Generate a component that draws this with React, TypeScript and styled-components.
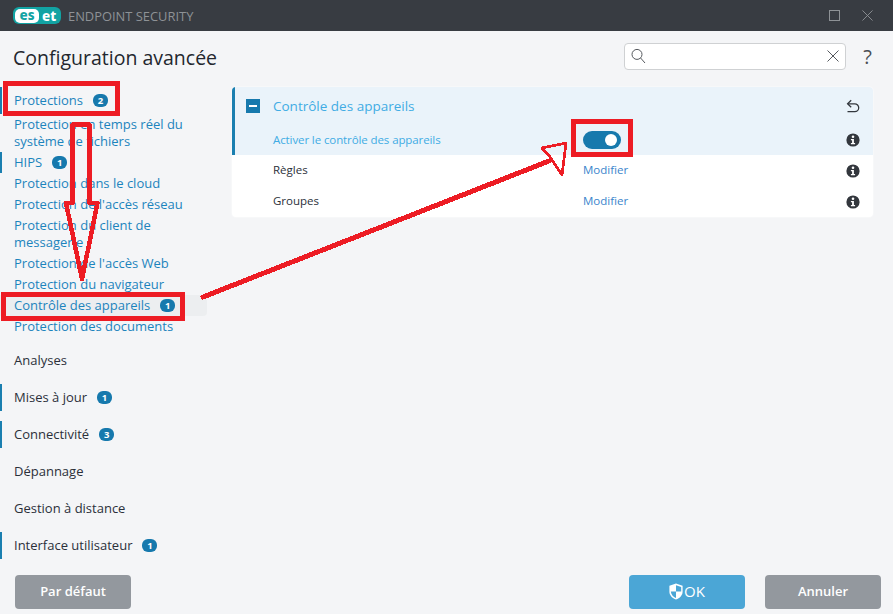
import React from 'react';
import styled, { createGlobalStyle } from 'styled-components';

const GlobalStyle = createGlobalStyle`
  html, body { margin: 0; padding: 0; background: #f4f5f7; }
  body { font-family: "Open Sans", "Noto Sans", sans-serif; }
`;

const Window = styled.div`
  position: relative;
  width: 893px;
  height: 614px;
  overflow: hidden;
  display: flex;
  flex-direction: column;
  background: #f4f5f7;
`;

const TitleBar = styled.header`
  height: 31px;
  flex: none;
  display: flex;
  align-items: center;
  padding: 0 19px 0 13px;
  background: #383c42;
`;

const Logo = styled.div`
  width: 48px;
  height: 17px;
  margin-right: 7px;
  box-sizing: border-box;
  display: flex;
  align-items: center;
  border-radius: 6px;
  background: #12a3a3;
  color: #fff;
  font: 800 13.5px/14px "Noto Sans", sans-serif;
  overflow: hidden;
`;

const LogoChip = styled.span`
  width: 24px;
  height: 14px;
  margin: 0 3px 0 2px;
  border-radius: 5px;
  background: #fff;
  color: #12a3a3;
  text-align: center;
  line-height: 12px;
`;

const Product = styled.span`
  flex: 1;
  color: #8e9296;
  font: 400 12.9px "Open Sans", sans-serif;
`;

const WindowButton = styled.button`
  width: 12px;
  height: 12px;
  margin-left: 21px;
  padding: 0;
  border: 0;
  background: none;
  display: block;
  svg { display: block; }
`;

const PageHeader = styled.div`
  height: 55px;
  flex: none;
  display: flex;
  align-items: center;
  padding: 0 21px 5px 13px;
  box-sizing: border-box;
`;

const Title = styled.h1`
  flex: 1;
  margin: 0;
  padding-top: 2px;
  color: #23272e;
  font: 500 19.5px "Open Sans", sans-serif;
`;

const SearchBox = styled.div`
  width: 222px;
  height: 27px;
  box-sizing: border-box;
  display: flex;
  align-items: center;
  justify-content: space-between;
  padding: 0 6px;
  border: 1px solid #cfd1d3;
  border-radius: 4px;
  background: #fff;
`;

const Help = styled.span`
  margin-left: 17px;
  color: #4a4e54;
  font: 400 20px "Open Sans", sans-serif;
`;

const Body = styled.div`
  flex: 1;
  display: flex;
  align-items: flex-start;
  padding-top: 1px;
`;

const Sidebar = styled.nav`
  width: 207px;
  flex: none;
  margin-right: 25px;
  display: flex;
  flex-direction: column;
`;

const Group = styled.div`
  display: flex;
  flex-direction: column;
  margin-bottom: 10px;
`;

const NavRow = styled.div<{ $marked?: boolean; $top?: boolean; $link?: boolean; $selected?: boolean }>`
  position: relative;
  display: flex;
  align-items: center;
  min-height: ${p => (p.$top ? 27 : 21)}px;
  box-sizing: border-box;
  padding: 2px 20px 2px 14px;
  color: ${p => (p.$link ? '#1c84bd' : '#2b303a')};
  font-size: 13px;
  font-weight: 500;
  line-height: 17px;
  background: ${p => (p.$selected ? '#eceef0' : 'transparent')};
  border-radius: ${p => (p.$selected ? '0 4px 4px 0' : '0')};
  &::before {
    content: '';
    display: ${p => (p.$marked ? 'block' : 'none')};
    position: absolute;
    left: 0;
    top: 0;
    bottom: 0;
    width: 2px;
    background: #1a7fb0;
  }
`;

const Badge = styled.span`
  flex: none;
  width: 15px;
  height: 13px;
  margin-left: 10px;
  border-radius: 6px;
  background: #1679ad;
  color: #fff;
  font: 700 9.5px/13px "Open Sans", sans-serif;
  text-align: center;
`;

const Panel = styled.section`
  width: 641px;
  border-radius: 4px;
  background: #fff;
  overflow: hidden;
  box-shadow: 0 0 0 1px #f7f8f9;
`;

const PanelHead = styled.div`
  border-left: 3px solid #1a7fb0;
  background: #eaf3fa;
`;

const Row = styled.div<{ $height: number }>`
  height: ${p => p.$height}px;
  display: flex;
  align-items: center;
  padding: 0 13px 0 0;
  font-size: 11.5px;
  color: #2b303a;
`;

const HeadRow = styled(Row)`
  color: #41ace4;
  font-size: 13.5px;
  font-weight: 500;
`;

const Expander = styled.span`
  width: 14px;
  height: 14px;
  margin: 0 13px 0 11px;
  display: flex;
  align-items: center;
  justify-content: center;
  background: #1679ad;
  &::after {
    content: '';
    width: 8px;
    height: 2px;
    background: #fff;
  }
`;

const Label = styled.span<{ $accent?: boolean; $indent?: number }>`
  width: 310px;
  margin-left: ${p => p.$indent ?? 38}px;
  padding-bottom: 2px;
  flex: none;
  color: ${p => (p.$accent ? '#41ace4' : '#2b303a')};
  font-weight: 400;
  letter-spacing: ${p => (p.$accent ? '-0.1px' : '0')};
`;

const LinkValue = styled.span`
  flex: 1;
  padding-bottom: 2px;
  color: #3a85cc;
`;

const Toggle = styled.span`
  position: relative;
  flex: none;
  width: 38px;
  height: 18px;
  margin-bottom: 1px;
  border-radius: 9px;
  background: #1679ad;
  &::after {
    content: '';
    position: absolute;
    right: 4px;
    top: 3px;
    width: 12px;
    height: 12px;
    border-radius: 50%;
    background: #fff;
  }
`;

const Spacer = styled.span`
  flex: 1;
`;

const Footer = styled.footer`
  height: 46px;
  flex: none;
  display: flex;
  align-items: flex-start;
  padding: 6px 12px 6px 15px;
  box-sizing: border-box;
  gap: 20px;
`;

const ActionButton = styled.button<{ $primary?: boolean }>`
  width: 116px;
  height: 34px;
  padding: 0 0 2px;
  display: flex;
  align-items: center;
  justify-content: center;
  border: 0;
  border-radius: 4px;
  background: ${p => (p.$primary ? '#4ba6d6' : '#93989e')};
  color: #fff;
  font: ${p => (p.$primary ? '500 15px' : '600 13px')} "Open Sans", sans-serif;
  svg { margin-right: 1px; }
`;

const FooterGap = styled.div`
  flex: 1;
`;

const RedBox = styled.div<{ $x: number; $y: number; $w: number; $h: number }>`
  position: absolute;
  left: ${p => p.$x}px;
  top: ${p => p.$y}px;
  width: ${p => p.$w}px;
  height: ${p => p.$h}px;
  box-sizing: border-box;
  border: 5px solid #ed1c24;
`;

const Annotations = styled.svg`
  position: absolute;
  left: 0;
  top: 0;
  pointer-events: none;
`;

const InfoIcon = () => (
  <svg width="14" height="14" viewBox="0 0 14 14">
    <circle cx="7" cy="7" r="6.6" fill="#33373d" />
    <circle cx="7" cy="3.8" r="1.3" fill="#fff" />
    <path d="M4.9 6h3v4h1.2v1.2H4.9V10h1.2V7.2H4.9z" fill="#fff" />
  </svg>
);

const UndoIcon = () => (
  <svg width="14" height="14" viewBox="0 0 14 14" fill="none" stroke="#33373d" strokeWidth="1.3">
    <path d="M1.5 12.6h7.3a3.9 3.9 0 0 0 0-7.8H1.8" />
    <path d="M5.2 1.2 1.6 4.8l3.6 3.4" />
  </svg>
);

const CrossIcon = ({ size, color }: { size: number; color: string }) => (
  <svg width={size} height={size} viewBox="0 0 12 12" fill="none" stroke={color} strokeWidth="1">
    <path d="M.5.5l11 11M11.5.5l-11 11" />
  </svg>
);

const SearchIcon = () => (
  <svg width="15" height="16" viewBox="0 0 15 16" fill="none" stroke="#55595e" strokeWidth="1">
    <circle cx="6" cy="6.4" r="5" />
    <path d="M9.6 10l4.4 5" />
  </svg>
);

const ShieldIcon = () => (
  <svg width="14" height="17" viewBox="0 0 14 17">
    <path d="M7 .4 13.6 2.8v5.6c0 3.8-2.8 6.6-6.6 8.2C3.2 15 .4 12.2.4 8.4V2.8z" fill="#fff" />
    <path d="M7 2.2 12.2 4v4.4H7zM7 8.4V15c-2.8-1.4-5-3.6-5.2-6.6z" fill="#4ba6d6" />
  </svg>
);

const subItems = [
  { label: 'Protection en temps réel du système de fichiers' },
  { label: 'HIPS', badge: 1, marked: true },
  { label: 'Protection dans le cloud' },
  { label: "Protection de l'accès réseau" },
  { label: 'Protection du client de messagerie' },
  { label: "Protection de l'accès Web" },
  { label: 'Protection du navigateur' },
  { label: 'Contrôle des appareils', badge: 1, selected: true },
  { label: 'Protection des documents' },
];

const topItems = [
  { label: 'Analyses' },
  { label: 'Mises à jour', badge: 1, marked: true },
  { label: 'Connectivité', badge: 3, marked: true },
  { label: 'Dépannage' },
  { label: 'Gestion à distance' },
  { label: 'Interface utilisateur', badge: 1, marked: true },
];

export default function App() {
  return (
    <Window>
      <GlobalStyle />
      <TitleBar>
        <Logo>
          <LogoChip>es</LogoChip>
          et
        </Logo>
        <Product>ENDPOINT SECURITY</Product>
        <WindowButton>
          <svg width="11" height="11" viewBox="0 0 11 11" fill="none" stroke="#8e9296">
            <rect x=".5" y=".5" width="10" height="10" />
          </svg>
        </WindowButton>
        <WindowButton>
          <CrossIcon size={11} color="#8e9296" />
        </WindowButton>
      </TitleBar>

      <PageHeader>
        <Title>Configuration avancée</Title>
        <SearchBox>
          <SearchIcon />
          <CrossIcon size={12} color="#55595e" />
        </SearchBox>
        <Help>?</Help>
      </PageHeader>

      <Body>
        <Sidebar>
          <Group>
            <NavRow $top $link $marked>
              Protections
              <Badge>2</Badge>
            </NavRow>
            {subItems.map(item => (
              <NavRow key={item.label} $link $marked={item.marked} $selected={item.selected}>
                <span>{item.label}</span>
                {item.badge && <Badge>{item.badge}</Badge>}
              </NavRow>
            ))}
          </Group>
          {topItems.map(item => (
            <Group key={item.label}>
              <NavRow $top $marked={item.marked}>
                {item.label}
                {item.badge && <Badge>{item.badge}</Badge>}
              </NavRow>
            </Group>
          ))}
        </Sidebar>

        <Panel>
          <PanelHead>
            <HeadRow $height={38}>
              <Expander />
              <span>Contrôle des appareils</span>
              <Spacer />
              <UndoIcon />
            </HeadRow>
            <Row $height={30}>
              <Label $accent>Activer le contrôle des appareils</Label>
              <Toggle />
              <Spacer />
              <InfoIcon />
            </Row>
          </PanelHead>
          <Row $height={31}>
            <Label $indent={41}>Règles</Label>
            <LinkValue>Modifier</LinkValue>
            <InfoIcon />
          </Row>
          <Row $height={31}>
            <Label $indent={41}>Groupes</Label>
            <LinkValue>Modifier</LinkValue>
            <InfoIcon />
          </Row>
        </Panel>
      </Body>

      <Footer>
        <ActionButton>Par défaut</ActionButton>
        <FooterGap />
        <ActionButton $primary>
          <ShieldIcon />
          OK
        </ActionButton>
        <ActionButton>Annuler</ActionButton>
      </Footer>

      {/* Hand-drawn markup on top of the screenshot */}
      <RedBox $x={3} $y={81} $w={117} $h={35} />
      <RedBox $x={1} $y={292} $w={184} $h={29} />
      <RedBox $x={571} $y={119} $w={62} $h={38} />
      <Annotations width="893" height="614" viewBox="0 0 893 614" fill="none" stroke="#ed1c24" shapeRendering="crispEdges">
        <path strokeWidth="4.5" strokeLinejoin="round" d="M72.5 203V124.5H89.5V203H97.5L82 279 66 203Z" />
        <path strokeWidth="5" strokeLinecap="round" d="M203 297 549 161" />
        <path strokeWidth="2.8" strokeLinejoin="round" d="M542 148 566 143 562 175 550 157Z" />
      </Annotations>
    </Window>
  );
}
